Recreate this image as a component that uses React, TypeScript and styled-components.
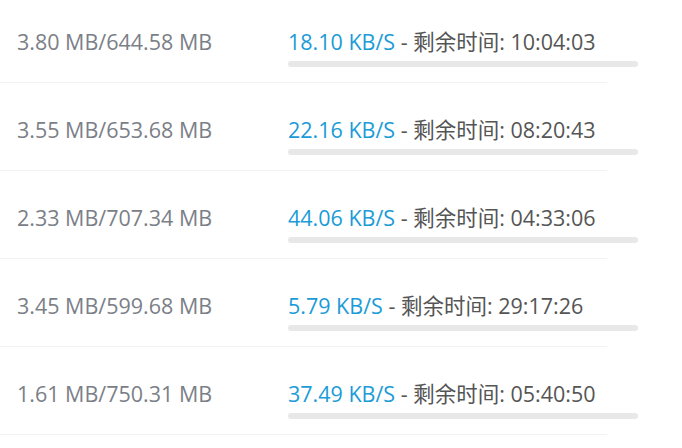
import React from 'react';
import styled, { createGlobalStyle } from 'styled-components';

interface Task {
  size: string;
  speed: string;
  remain: string;
}

const tasks: Task[] = [
  { size: '3.80 MB/644.58 MB', speed: '18.10 KB/S', remain: '10:04:03' },
  { size: '3.55 MB/653.68 MB', speed: '22.16 KB/S', remain: '08:20:43' },
  { size: '2.33 MB/707.34 MB', speed: '44.06 KB/S', remain: '04:33:06' },
  { size: '3.45 MB/599.68 MB', speed: '5.79 KB/S', remain: '29:17:26' },
  { size: '1.61 MB/750.31 MB', speed: '37.49 KB/S', remain: '05:40:50' },
];

const App = () => {
  return (
    <>
      <GlobalStyle />
      <List>
        {tasks.map(task => (
          <Row key={task.size}>
            <Size>{task.size}</Size>
            <Status>
              <Line>
                <Speed>{task.speed}</Speed>
                <Remain> - 剩余时间: {task.remain}</Remain>
              </Line>
              <Bar />
            </Status>
          </Row>
        ))}
      </List>
    </>
  );
};

export default App;

const GlobalStyle = createGlobalStyle`
  body {
    margin: 0;
    background: #fff;
    font-family: 'Open Sans', 'Noto Sans CJK SC', sans-serif;
    overflow: hidden;
  }
`;

const List = styled.div`
  width: 607px;
  margin-top: -5px;
`;

const Row = styled.div`
  display: flex;
  align-items: flex-start;
  padding-top: 35px;
  height: 52px;
  border-bottom: 1px solid #f2f2f2;
`;

const Size = styled.div`
  flex-shrink: 0;
  width: 271px;
  padding-left: 17px;
  font-size: 21.5px;
  line-height: 24px;
  color: #7b8087;
  white-space: nowrap;
`;

const Status = styled.div`
  flex-shrink: 0;
  display: flex;
  flex-direction: column;
  gap: 7px;
`;

const Line = styled.div`
  font-size: 21.5px;
  line-height: 24px;
  white-space: nowrap;
`;

const Speed = styled.span`
  color: #1b9bd7;
`;

const Remain = styled.span`
  color: #555;
`;

const Bar = styled.div`
  width: 350px;
  height: 6px;
  border-radius: 3px;
  background: #e8e8e8;
`;
